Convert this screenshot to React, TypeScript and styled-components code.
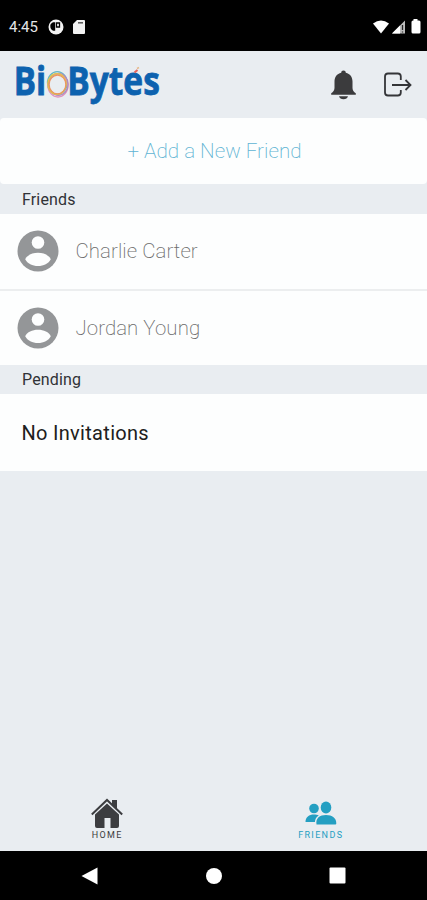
import React from "react";
import styled, { createGlobalStyle } from "styled-components";

const GlobalStyle = createGlobalStyle`
  * { box-sizing: border-box; }
  body { margin: 0; background: #e9edf1; font-family: Roboto, sans-serif; }
`;

const Screen = styled.div`
  width: 427px;
  height: 900px;
  display: flex;
  flex-direction: column;
  overflow: hidden;
  background: #e9edf1;
`;

const StatusBar = styled.div`
  height: 51px;
  flex: none;
  display: flex;
  align-items: center;
  padding: 2px 5px 0 9px;
  background: #000;
  color: #e6e6e6;
`;

const Clock = styled.span`
  width: 39px;
  font-size: 15px;
  font-weight: 400;
`;

const StatusGroup = styled.div<{ $end?: boolean }>`
  display: flex;
  align-items: center;
  gap: ${(p) => (p.$end ? "2px" : "9px")};
  margin-left: ${(p) => (p.$end ? "auto" : "0")};
`;

const Header = styled.header`
  height: 67px;
  flex: none;
  display: flex;
  justify-content: space-between;
  align-items: center;
  padding: 0 15.5px 0 13px;
`;

const Icon = styled.svg`
  display: block;
  flex: none;
`;

const HeaderActions = styled.div`
  display: flex;
  align-items: center;
  gap: 26px;
`;

const IconButton = styled.button`
  border: 0;
  padding: 0;
  background: none;
`;

const AddButton = styled.button`
  height: 66px;
  flex: none;
  border: 0;
  border-radius: 4px;
  background: #fdfefe;
  color: #5fb4d3;
  font: 200 20.6px Roboto, sans-serif;
  letter-spacing: 0;
  padding: 0 0 1px 2px;
`;

const SectionTitle = styled.h2<{ $short?: boolean }>`
  height: ${(p) => (p.$short ? "29px" : "30px")};
  flex: none;
  display: flex;
  align-items: center;
  margin: 0;
  padding-left: 22px;
  color: #303236;
  font-size: 16px;
  font-weight: 400;
  letter-spacing: 0.15px;
`;

const FriendList = styled.div`
  height: 151px;
  flex: none;
  display: grid;
  grid-template-rows: 75px 76px;
`;

const FriendRow = styled.div`
  display: flex;
  align-items: center;
  gap: 16.5px;
  padding: 0 0 1px 17px;
  background: #fdfefe;

  & + & {
    border-top: 2px solid #eceeef;
  }
`;

const FriendName = styled.span`
  color: #6c6c6c;
  font-size: 20.4px;
  font-weight: 200;
  letter-spacing: 0.08px;
`;

const EmptyRow = styled.div`
  height: 77px;
  flex: none;
  display: flex;
  align-items: center;
  padding-left: 21.5px;
  background: #fdfefe;
  color: #202020;
  font-size: 20px;
  letter-spacing: 0.3px;
`;

const TabBar = styled.nav`
  height: 56px;
  flex: none;
  display: flex;
  margin-top: auto;
`;

const Tab = styled.div<{ $active?: boolean }>`
  flex: 1;
  display: flex;
  flex-direction: column;
  align-items: center;
  color: ${(p) => (p.$active ? "#249fc2" : "#3c3d40")};
`;

const TabLabel = styled.span`
  font-size: 9px;
  line-height: 12px;
  font-weight: 400;
  letter-spacing: 1.35px;
  margin-right: -1px;
`;

const SystemBar = styled.div`
  height: 49px;
  flex: none;
  display: flex;
  align-items: center;
  justify-content: space-between;
  padding: 0 81px;
  background: #000;
`;

const LogoDrawing = styled(Icon)`
  overflow: visible;
`;

function Logo() {
  return (
    <LogoDrawing width="150" height="58" viewBox="13 55.500 150 58" role="img" aria-label="BioBytes">
      <g
        fill="#0d62af"
        stroke="#0d62af"
        strokeWidth="0.8"
        fontFamily="'Open Sans', sans-serif"
        fontWeight="700"
        fontSize="40"
      >
        <text x="13.700" y="94.300" textLength="32.500" lengthAdjust="spacingAndGlyphs">Bi</text>
        <text x="67.300" y="94.300" textLength="92.500" lengthAdjust="spacingAndGlyphs">Bytes</text>
      </g>
      <g fill="none" strokeWidth="1.300">
        <ellipse cx="57.300" cy="82.500" rx="9.800" ry="11.300" stroke="#65b8c4" />
        <ellipse cx="58" cy="85.200" rx="10" ry="11.300" stroke="#df91bd" />
        <ellipse cx="58.300" cy="83.800" rx="9.800" ry="11" stroke="#b08bc0" />
        <ellipse cx="57" cy="83.500" rx="9.200" ry="10.300" stroke="#e5c646" />
        <ellipse cx="57.500" cy="84" rx="8.400" ry="9.300" stroke="#ed9560" />
      </g>
      <path d="M134.500 72l3-2.500" stroke="#e6655c" strokeWidth="2.200" />
      <path d="M137 68l2-1" stroke="#e5b98a" strokeWidth="1.500" />
    </LogoDrawing>
  );
}

function Avatar() {
  return (
    <Icon width="42" height="42" viewBox="0 0 42 42">
      <circle cx="21" cy="21" r="20.500" fill="#949698" />
      <circle cx="21" cy="12.500" r="6.300" fill="#fdfefe" />
      <path d="M8.200 29.200C10 25.200 15.300 22.800 21 22.800s11 2.400 12.800 6.400C31.500 33.500 26.700 36 21 36S10.500 33.500 8.200 29.200Z" fill="#fdfefe" />
    </Icon>
  );
}

const friends = ["Charlie Carter", "Jordan Young"];

export default function App() {
  return (
    <>
      <GlobalStyle />
      <Screen>
        <StatusBar>
          <Clock>4:45</Clock>
          <StatusGroup>
            <Icon width="16" height="16" viewBox="0 0 16 16">
              <circle cx="8" cy="8" r="7.500" fill="#f2f2f2" />
              <path d="M5 3.200h2.200v8.600A4.500 4.500 0 0 1 5 3.200z" fill="#000" />
              <path d="M8.500 4H11.500V8H8.500z" fill="#f2f2f2" stroke="#000" strokeWidth="1.300" />
            </Icon>
            <Icon width="12" height="14" viewBox="0 0 12 14">
              <path d="M4 0h7q1 0 1 1v12q0 1-1 1H1q-1 0-1-1V4z" fill="#f2f2f2" />
              <path d="M5 2.800h5" stroke="#555" strokeWidth="1.500" />
            </Icon>
          </StatusGroup>
          <StatusGroup $end>
            <Icon width="16" height="14" viewBox="0 0 16 14">
              <path d="M0 3.500Q8-2.500 16 3.500L8 13.500z" fill="#fff" />
            </Icon>
            <Icon width="15" height="14" viewBox="0 0 15 14">
              <path d="M14 .5V13.500H1z" fill="#bbb" />
              <path d="M9 5.500V13.500H1z" fill="#fff" />
              <path d="M11.500 5v5M11.500 11.500v1" stroke="#222" strokeWidth="1.300" />
            </Icon>
            <Icon width="14" height="15" viewBox="0 0 14 15">
              <path d="M5.500 0h4v1.500H11q1.500 0 1.500 1.500V13q0 1.500-1.500 1.500H5q-1.500 0-1.500-1.500V3q0-1.500 1.500-1.500h.500z" fill="#fff" />
            </Icon>
          </StatusGroup>
        </StatusBar>

        <Header>
          <Logo />
          <HeaderActions>
            <IconButton aria-label="Notifications">
              <Icon width="27" height="30" viewBox="0 0 27 30">
                <path d="M13.500.500c1.500 0 2.100.900 2.300 2.200 4.300 1 6.700 4.400 6.700 8.800v6.500c0 2.300 1.300 3.800 3.300 5.300v1.500H1.200v-1.500C3.200 21.800 4.500 20.300 4.500 18v-6.500c0-4.400 2.400-7.800 6.700-8.800.200-1.300.800-2.200 2.300-2.200Z" fill="#3b3b3d" />
                <path d="M9 26.300h9c-.500 2-2.200 3-4.500 3s-4-1-4.500-3Z" fill="#3b3b3d" />
              </Icon>
            </IconButton>
            <IconButton aria-label="Log out">
              <Icon width="29" height="26" viewBox="0 0 29 26" fill="none" stroke="#343538" strokeWidth="1.800">
                <path d="M17.800 8V4.500q0-3-3-3H5q-3 0-3 3v16q0 3 3 3h9.800q3 0 3-3V18M9 13h18M22.500 8l5 5-5 5" />
              </Icon>
            </IconButton>
          </HeaderActions>
        </Header>

        <AddButton>+ Add a New Friend</AddButton>
        <SectionTitle>Friends</SectionTitle>
        <FriendList>
          {friends.map((name) => (
            <FriendRow key={name}>
              <Avatar />
              <FriendName>{name}</FriendName>
            </FriendRow>
          ))}
        </FriendList>
        <SectionTitle $short>Pending</SectionTitle>
        <EmptyRow>No Invitations</EmptyRow>

        <TabBar>
          <Tab>
            <Icon width="34" height="34" viewBox="0 0 34 34" fill="currentColor">
              <path d="M22 5h5v10l-5-5z" />
              <path d="M17 8.500 29 19.500V31q0 2-2 2h-6.500V23h-6v10H7q-2 0-2-2V19.500z" />
              <path d="M1.800 19.500 17 5l15.200 14.500" fill="none" stroke="currentColor" strokeWidth="2" />
            </Icon>
            <TabLabel>HOME</TabLabel>
          </Tab>
          <Tab $active>
            <Icon width="34" height="34" viewBox="0 0 34 34" fill="currentColor">
              <circle cx="11" cy="13.500" r="4.800" />
              <path d="M2.500 27c0-5 3.500-7.500 8.500-7.500 1.500 0 3.500.300 4.800.900-2.700 1.700-3.600 3.700-3.900 6.600z" />
              <ellipse cx="23" cy="12.500" rx="5.300" ry="5.900" />
              <path d="M13.500 29.500c-1-6.500 3.300-9.500 9.500-9.500s10.500 3 10.300 8.500q0 1-1 1z" />
            </Icon>
            <TabLabel>FRIENDS</TabLabel>
          </Tab>
        </TabBar>

        <SystemBar>
          <Icon width="17" height="18" viewBox="0 0 17 18"><path d="M.5 9 16.500.500v17z" fill="#fff" /></Icon>
          <Icon width="16" height="16" viewBox="0 0 16 16"><circle cx="8" cy="8" r="8" fill="#fff" /></Icon>
          <Icon width="17" height="17" viewBox="0 0 17 17"><rect x=".5" y=".5" width="16" height="16" rx="1" fill="#fff" /></Icon>
        </SystemBar>
      </Screen>
    </>
  );
}
